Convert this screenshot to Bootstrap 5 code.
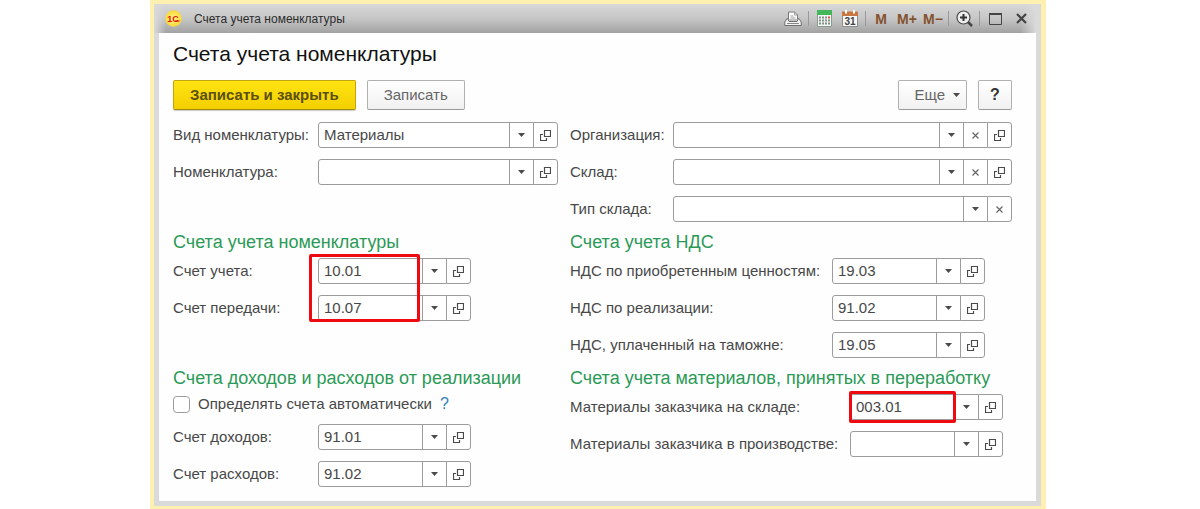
<!DOCTYPE html>
<html lang="ru">
<head>
<meta charset="utf-8">
<meta name="viewport" content="width=device-width, initial-scale=1">
<title>Счета учета номенклатуры</title>
<link href="https://cdn.jsdelivr.net/npm/bootstrap@5.3.0/dist/css/bootstrap.min.css" rel="stylesheet">
<style>
  body { font-family: "Liberation Sans", Arial, sans-serif; font-size: 15px; line-height: 20px; color: #484848; background: #fff; padding: 0 154px 0 150px; }
  .frame { min-height: 100vh; background: #dadada; border: 4px solid #fdf0b0; border-right-width: 5px; border-bottom-width: 3px; }
  .titlebar { height: 29px; padding: 0 7px 0 11px; background: linear-gradient(to right, #dadada 0, transparent 12px, transparent calc(100% - 20px), #dadada calc(100% - 5px)), linear-gradient(#d8d8d8, #c6c6c6 50%, #a2a2a2); }
  .titlebar .caption-text { font-size: 12px; color: #2c2c2c; }
  .tool { width: 26px; height: 28px; padding: 0; border: 0; background: none; font-size: 14px; font-weight: 700; color: #84522c; display: flex; align-items: center; justify-content: center; }
  .sep { width: 1px; height: 15px; margin: 0 2px; background: #999; }
  .sheet { margin: 0 5px; padding: 8px 24px 13px 14px; background: #fefefe; }
  .frame > .sheet { margin-bottom: 5px; }
  h1 { font-size: 21px; line-height: 26px; color: #111; font-weight: 400; margin: 0 0 13px; }
  h2 { font-size: 18px; line-height: 24px; color: #2b9a57; font-weight: 400; margin: 0 0 4px; white-space: nowrap; }
  .toolbar { margin-bottom: 12px; gap: 11px; }
  .cmd { height: 30px; padding: 0 16px; font-size: 15px; line-height: 20px; color: #666; border: 1px solid #b0b0b0; border-bottom-color: #999; border-radius: 2px; background: linear-gradient(#fff, #f1f1f1); }
  .cmd-main { color: #5b5010; font-weight: 700; background: linear-gradient(#ffe312, #f4cf00); border-color: #c2a50c; border-bottom-color: #a48b0a; box-shadow: 0 1px 1px #c9c9c9; }
  .cmd-more { padding: 0 6px 0 15px; }
  .cmd-help { width: 34px; padding: 0; font-size: 16px; font-weight: 700; color: #333; }
  .form-cols { display: grid; grid-template-columns: 385fr 442fr; column-gap: 12px; row-gap: 8px; }
  .rows { display: grid; gap: 11px; position: relative; }
  .line { display: flex; align-items: center; }
  .line > label { flex: none; white-space: nowrap; }
  .w-item > label { width: 145px; }
  .w-org > label { width: 103px; }
  .w-vat > label { width: 262px; }
  .w-mat > label { width: 280px; }
  .combo { height: 26px; flex: 1; flex-wrap: nowrap; }
  .short .combo { flex: 0 0 153px; width: 153px; }
  .combo .form-control { height: 26px; min-height: 0; padding: 0 5px 2px; font-size: 15px; line-height: 20px; color: #484848; border-color: #9c9c9c; border-radius: 3px; background: #fff; }
  .combo .btn { width: 25px; height: 26px; padding: 0; border-color: #9c9c9c; border-radius: 3px; display: flex; align-items: center; justify-content: center; flex: none; background: #fff; color: #4a4a4a; }
  .auto { height: 20px; margin-bottom: 10px; gap: 8px; }
  .auto input { width: 17px; height: 17px; margin: 0; border: 1px solid #9c9c9c; border-radius: 2px; }
  .auto a { color: #2f7fc0; text-decoration: none; font-size: 16px; }
  .outline-red { position: absolute; border: 3px solid #ee0a10; border-radius: 2px; pointer-events: none; z-index: 10; }
  .mark-items { left: 136px; top: -4px; width: 111px; height: 68px; }
  .mark-stock { left: 279px; top: -3px; width: 107px; height: 32px; }
</style>
</head>
<body>
<svg class="d-none" aria-hidden="true">
  <symbol id="down" viewBox="0 0 7 4"><path d="M0 0h7L3.500 4z" fill="#4a4a4a"/></symbol>
  <symbol id="open" viewBox="0 0 11 11"><path d="M4.500 .5h6v6h-6zM3 4.500H.5v6h6V8" fill="none" stroke="#4a4a4a" stroke-width="1.200"/></symbol>
  <symbol id="clear" viewBox="0 0 7 7"><path d="M.5 .5l6 6m0-6l-6 6" fill="none" stroke="#666" stroke-width="1.200"/></symbol>
</svg>

<div class="frame d-flex flex-column">
  <header class="titlebar d-flex align-items-center">
    <svg width="17" height="17" viewBox="0 0 17 17" aria-hidden="true">
      <defs><radialGradient id="sun"><stop offset="0" stop-color="#fff58a"/><stop offset="1" stop-color="#f9d838"/></radialGradient></defs>
      <circle cx="8.500" cy="8.500" r="8.200" fill="url(#sun)"/>
      <text x="8" y="11.500" text-anchor="middle" font-size="9" font-weight="700" fill="#dc1c10">1С</text>
      <path d="M10 11h4.500" stroke="#dc1c10" stroke-width="1.200"/>
    </svg>
    <span class="caption-text ms-2 ps-1 me-auto">Счета учета номенклатуры</span>
    <button class="tool" type="button" aria-label="Печать"><svg width="18" height="16" viewBox="0 0 18 16"><path d="M4.500 8V1h6l3 3v4" fill="#fff" stroke="#777"/><path d="M10.500 1v3h3M6.500 5h3M6.500 7h5" fill="none" stroke="#999"/><path d="M3.500 7.500H3L.8 11v3.500h16.400V11L15 7.500h-.5L13 10.500H5z" fill="#f3f3f3" stroke="#707070"/><path d="M3 12.500h12" stroke="#888"/></svg></button>
    <span class="sep"></span>
    <button class="tool" type="button" aria-label="Калькулятор"><svg width="15" height="17" viewBox="0 0 15 17"><path d="M.5 .5h14v16H.5z" fill="#f5f5f5" stroke="#8a9a8c"/><path d="M0 0h15v5H0z" fill="#43b75a"/><path d="M2 7.500h8M2 10.500h8M2 13.500h8" stroke="#7d9486" stroke-width="2" stroke-dasharray="2 1"/><path d="M11 7.500h2" stroke="#e0503c" stroke-width="2"/><path d="M11 10.500h2M11 13.500h2" stroke="#7d9486" stroke-width="2"/></svg></button>
    <button class="tool" type="button" aria-label="Календарь"><svg width="16" height="17" viewBox="0 0 16 17"><path d="M.5 2.500h15v14H.5z" fill="#f7f7f7" stroke="#8d8d8d"/><path d="M0 1.500h16V6H0z" fill="#c87743"/><path d="M4 0v3.500M12 0v3.500" stroke="#fff" stroke-width="2"/><text x="8" y="14.500" text-anchor="middle" font-size="10" fill="#444">31</text></svg></button>
    <span class="sep"></span>
    <button class="tool" type="button">M</button>
    <button class="tool" type="button">M+</button>
    <button class="tool" type="button">M−</button>
    <span class="sep"></span>
    <button class="tool" type="button" aria-label="Масштаб"><svg width="17" height="17" viewBox="0 0 17 17"><circle cx="7.500" cy="7.500" r="6.500" fill="#eee" stroke="#4a4a4a" stroke-width="1.200"/><path d="M4 7.500h7M7.500 4v7" stroke="#333" stroke-width="2"/><path d="M12 12l4 4" stroke="#444" stroke-width="2.500"/></svg></button>
    <span class="sep"></span>
    <button class="tool" type="button" aria-label="Развернуть"><svg width="13" height="12" viewBox="0 0 13 12"><path d="M.5 1h12v10.500H.5z" fill="none" stroke="#444"/><path d="M0 1h13" stroke="#444" stroke-width="2"/></svg></button>
    <button class="tool" type="button" aria-label="Закрыть"><svg width="11" height="11" viewBox="0 0 11 11"><path d="M1 1l9 9m0-9l-9 9" stroke="#444" stroke-width="2.200"/></svg></button>
  </header>

  <main class="sheet flex-grow-1">
    <h1>Счета учета номенклатуры</h1>
    <div class="toolbar d-flex">
      <button class="cmd cmd-main" type="button">Записать и закрыть</button>
      <button class="cmd me-auto" type="button">Записать</button>
      <button class="cmd cmd-more d-flex align-items-center gap-2" type="button">Еще <svg width="7" height="4"><use href="#down"/></svg></button>
      <button class="cmd cmd-help" type="button">?</button>
    </div>

    <form class="form-cols">
      <div class="rows align-content-start">
        <div class="line w-item"><label for="kind">Вид номенклатуры:</label>
          <div class="input-group combo"><input class="form-control" id="kind" value="Материалы"><button class="btn" type="button" aria-label="Выбрать"><svg width="7" height="4"><use href="#down"/></svg></button><button class="btn" type="button" aria-label="Открыть"><svg width="11" height="11"><use href="#open"/></svg></button></div></div>
        <div class="line w-item"><label for="item">Номенклатура:</label>
          <div class="input-group combo"><input class="form-control" id="item"><button class="btn" type="button" aria-label="Выбрать"><svg width="7" height="4"><use href="#down"/></svg></button><button class="btn" type="button" aria-label="Открыть"><svg width="11" height="11"><use href="#open"/></svg></button></div></div>
      </div>
      <div class="rows align-content-start">
        <div class="line w-org"><label for="org">Организация:</label>
          <div class="input-group combo"><input class="form-control" id="org"><button class="btn" type="button" aria-label="Выбрать"><svg width="7" height="4"><use href="#down"/></svg></button><button class="btn" type="button" aria-label="Очистить"><svg width="7" height="7"><use href="#clear"/></svg></button><button class="btn" type="button" aria-label="Открыть"><svg width="11" height="11"><use href="#open"/></svg></button></div></div>
        <div class="line w-org"><label for="store">Склад:</label>
          <div class="input-group combo"><input class="form-control" id="store"><button class="btn" type="button" aria-label="Выбрать"><svg width="7" height="4"><use href="#down"/></svg></button><button class="btn" type="button" aria-label="Очистить"><svg width="7" height="7"><use href="#clear"/></svg></button><button class="btn" type="button" aria-label="Открыть"><svg width="11" height="11"><use href="#open"/></svg></button></div></div>
        <div class="line w-org"><label for="storetype">Тип склада:</label>
          <div class="input-group combo"><input class="form-control" id="storetype"><button class="btn" type="button" aria-label="Выбрать"><svg width="7" height="4"><use href="#down"/></svg></button><button class="btn" type="button" aria-label="Очистить"><svg width="7" height="7"><use href="#clear"/></svg></button></div></div>
      </div>

      <section>
        <h2>Счета учета номенклатуры</h2>
        <div class="rows short">
          <div class="line w-item"><label for="acc">Счет учета:</label>
            <div class="input-group combo"><input class="form-control" id="acc" value="10.01"><button class="btn" type="button" aria-label="Выбрать"><svg width="7" height="4"><use href="#down"/></svg></button><button class="btn" type="button" aria-label="Открыть"><svg width="11" height="11"><use href="#open"/></svg></button></div></div>
          <div class="line w-item"><label for="transfer">Счет передачи:</label>
            <div class="input-group combo"><input class="form-control" id="transfer" value="10.07"><button class="btn" type="button" aria-label="Выбрать"><svg width="7" height="4"><use href="#down"/></svg></button><button class="btn" type="button" aria-label="Открыть"><svg width="11" height="11"><use href="#open"/></svg></button></div></div>
          <div class="outline-red mark-items"></div>
        </div>
      </section>
      <section>
        <h2>Счета учета НДС</h2>
        <div class="rows short">
          <div class="line w-vat"><label for="vatin">НДС по приобретенным ценностям:</label>
            <div class="input-group combo"><input class="form-control" id="vatin" value="19.03"><button class="btn" type="button" aria-label="Выбрать"><svg width="7" height="4"><use href="#down"/></svg></button><button class="btn" type="button" aria-label="Открыть"><svg width="11" height="11"><use href="#open"/></svg></button></div></div>
          <div class="line w-vat"><label for="vatout">НДС по реализации:</label>
            <div class="input-group combo"><input class="form-control" id="vatout" value="91.02"><button class="btn" type="button" aria-label="Выбрать"><svg width="7" height="4"><use href="#down"/></svg></button><button class="btn" type="button" aria-label="Открыть"><svg width="11" height="11"><use href="#open"/></svg></button></div></div>
          <div class="line w-vat"><label for="vatcustoms">НДС, уплаченный на таможне:</label>
            <div class="input-group combo"><input class="form-control" id="vatcustoms" value="19.05"><button class="btn" type="button" aria-label="Выбрать"><svg width="7" height="4"><use href="#down"/></svg></button><button class="btn" type="button" aria-label="Открыть"><svg width="11" height="11"><use href="#open"/></svg></button></div></div>
        </div>
      </section>

      <section>
        <h2>Счета доходов и расходов от реализации</h2>
        <div class="auto d-flex align-items-center">
          <input class="form-check-input" type="checkbox" id="auto"><label for="auto">Определять счета автоматически</label><a href="#">?</a>
        </div>
        <div class="rows short">
          <div class="line w-item"><label for="income">Счет доходов:</label>
            <div class="input-group combo"><input class="form-control" id="income" value="91.01"><button class="btn" type="button" aria-label="Выбрать"><svg width="7" height="4"><use href="#down"/></svg></button><button class="btn" type="button" aria-label="Открыть"><svg width="11" height="11"><use href="#open"/></svg></button></div></div>
          <div class="line w-item"><label for="expense">Счет расходов:</label>
            <div class="input-group combo"><input class="form-control" id="expense" value="91.02"><button class="btn" type="button" aria-label="Выбрать"><svg width="7" height="4"><use href="#down"/></svg></button><button class="btn" type="button" aria-label="Открыть"><svg width="11" height="11"><use href="#open"/></svg></button></div></div>
        </div>
      </section>
      <section>
        <h2>Счета учета материалов, принятых в переработку</h2>
        <div class="rows short">
          <div class="line w-mat"><label for="matstock">Материалы заказчика на складе:</label>
            <div class="input-group combo"><input class="form-control" id="matstock" value="003.01"><button class="btn" type="button" aria-label="Выбрать"><svg width="7" height="4"><use href="#down"/></svg></button><button class="btn" type="button" aria-label="Открыть"><svg width="11" height="11"><use href="#open"/></svg></button></div></div>
          <div class="line w-mat"><label for="matprod">Материалы заказчика в производстве:</label>
            <div class="input-group combo"><input class="form-control" id="matprod"><button class="btn" type="button" aria-label="Выбрать"><svg width="7" height="4"><use href="#down"/></svg></button><button class="btn" type="button" aria-label="Открыть"><svg width="11" height="11"><use href="#open"/></svg></button></div></div>
          <div class="outline-red mark-stock"></div>
        </div>
      </section>
    </form>
  </main>
</div>
<script src="https://cdn.jsdelivr.net/npm/bootstrap@5.3.0/dist/js/bootstrap.bundle.min.js"></script>
</body>
</html>
